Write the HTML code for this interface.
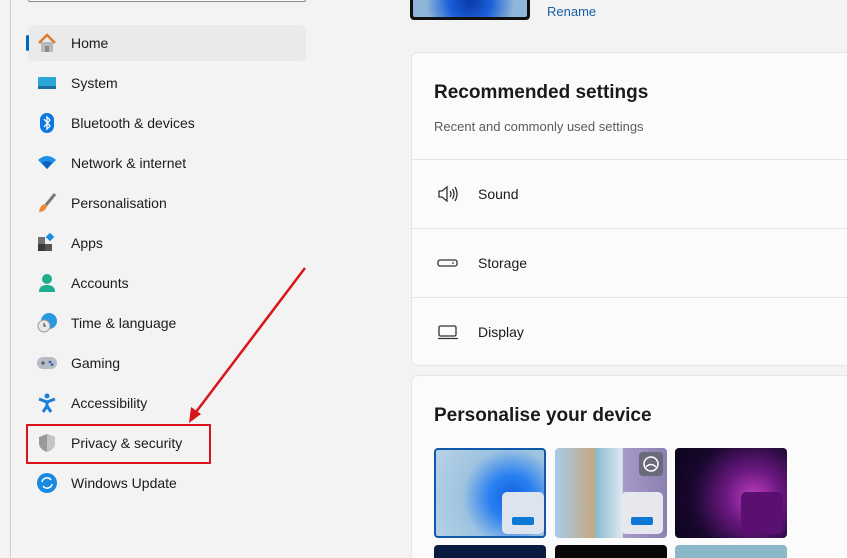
<!DOCTYPE html>
<html style="width:847px;height:558px;overflow:hidden"><head><meta charset="utf-8"><style>
*{margin:0;padding:0;box-sizing:border-box}
body{width:847px;height:558px;overflow:hidden;background:#f3f3f3;font-family:"Liberation Sans",sans-serif;position:relative;color:#1a1a1a}
.abs{position:absolute}
.side-line{left:10px;top:0;width:1px;height:558px;background:#cfcfcf}
.search{left:28px;top:0;width:278px;height:2px;border:1px solid #8a8a8a;border-top:none;border-radius:0 0 5px 5px;background:#fbfbfb}
.item{position:absolute;left:28px;width:278px;height:36px;border-radius:5px;font-size:14px;line-height:36px;padding-left:43px;color:#1b1b1b}
.item.sel{background:#eaeaea}
.ic{position:absolute;left:9px;top:8px;width:20px;height:20px}
.card{position:absolute;left:411px;width:436px;background:#fbfbfb;border:1px solid #e5e5e5;border-right:none;border-radius:7px 0 0 7px}
.row{position:absolute;left:0;width:100%;border-top:1px solid #e5e5e5;height:69px;font-size:14px;line-height:69px;padding-left:66px;color:#1b1b1b}
.ri{position:absolute;left:25px;top:25px}
.th{position:absolute;top:448px;width:112px;height:90px;border-radius:4px;overflow:hidden}
</style></head><body>
<div class="abs side-line"></div>
<div class="abs search"></div>

<div class="item sel" style="top:25px"><div class="abs" style="left:-2px;top:10px;width:3px;height:16px;background:#0067c0;border-radius:2px"></div>
<svg class="ic" viewBox="0 0 20 20"><path d="M4 9v10h12V9" fill="#b9b9b9"/><path d="M2 10L10 2l8 8" fill="none" stroke="#e07a2a" stroke-width="2.5"/><rect x="8" y="13" width="4" height="6" fill="#8a8a8a"/></svg>Home</div>
<div class="item" style="top:65px"><svg class="ic" viewBox="0 0 20 20"><rect x="1" y="4" width="18" height="12" rx="1" fill="#2aa6d8"/><rect x="1" y="13" width="18" height="3" fill="#1a6fa0"/></svg>System</div>
<div class="item" style="top:105px"><svg class="ic" viewBox="0 0 20 20"><rect x="3" y="0" width="14" height="20" rx="7" fill="#0b78e0"/><path d="M7 6l6 7-3 3V4l3 3-6 7" fill="none" stroke="#fff" stroke-width="1.3"/></svg>Bluetooth &amp; devices</div>
<div class="item" style="top:145px"><svg class="ic" viewBox="0 0 20 20"><path d="M1 7Q10-1 19 7L10 16Z" fill="#1e90e8"/><path d="M5 10Q10 6 15 10L10 16Z" fill="#0a62c0"/></svg>Network &amp; internet</div>
<div class="item" style="top:185px"><svg class="ic" viewBox="0 0 20 20"><path d="M18 1L9 12" stroke="#777" stroke-width="3"/><path d="M8 11q-5 1-6 8q6 0 8-6z" fill="#f08a2a"/></svg>Personalisation</div>
<div class="item" style="top:225px"><svg class="ic" viewBox="0 0 20 20"><rect x="1" y="4" width="7" height="7" fill="#707070"/><rect x="1" y="11" width="7" height="7" fill="#3a3a3a"/><rect x="8" y="11" width="7" height="7" fill="#555"/><rect x="10" y="1" width="6" height="6" transform="rotate(45 13 4)" fill="#1b8de0"/></svg>Apps</div>
<div class="item" style="top:265px"><svg class="ic" viewBox="0 0 20 20"><circle cx="10" cy="6" r="5" fill="#1fae8c"/><path d="M2 19q0-7 8-7t8 7z" fill="#1fae8c"/></svg>Accounts</div>
<div class="item" style="top:305px"><svg class="ic" viewBox="0 0 20 20"><circle cx="12" cy="8" r="8" fill="#2a9ae0"/><circle cx="7" cy="13" r="6" fill="#e8e8e8" stroke="#999" stroke-width="1"/><path d="M7 10v3h2" stroke="#333" fill="none"/></svg>Time &amp; language</div>
<div class="item" style="top:345px"><svg class="ic" viewBox="0 0 20 20"><rect x="0" y="4" width="20" height="12" rx="6" fill="#b5bcc5"/><circle cx="13" cy="9" r="1.3" fill="#2c5fa0"/><circle cx="15" cy="11.5" r="1.3" fill="#2c5fa0"/><path d="M4 10h4M6 8v4" stroke="#444"/></svg>Gaming</div>
<div class="item" style="top:385px"><svg class="ic" viewBox="0 0 20 20"><circle cx="10" cy="3" r="2.5" fill="#1a7fd6"/><path d="M2 6l8 3 8-3M10 9v4l-4 6M10 13l4 6" stroke="#1a7fd6" stroke-width="3" fill="none"/></svg>Accessibility</div>
<div class="item" style="top:425px"><svg class="ic" viewBox="0 0 20 20"><path d="M10 1L2 4v6q0 6 8 9 8-3 8-9V4z" fill="#9a9a9a"/><path d="M10 1v18q8-3 8-9V4z" fill="#c4c4c4"/></svg>Privacy &amp; security</div>
<div class="item" style="top:465px"><svg class="ic" viewBox="0 0 20 20"><circle cx="10" cy="10" r="10" fill="#1a8ae0"/><path d="M5 9a5 5 0 0 1 9-2M15 11a5 5 0 0 1-9 2" stroke="#fff" stroke-width="1.5" fill="none"/></svg>Windows Update</div>

<div class="abs" style="left:26px;top:424px;width:185px;height:40px;border:2px solid #d9141b"></div>
<svg class="abs" style="left:0;top:0" width="847" height="558"><line x1="305" y1="268" x2="196" y2="412" stroke="#d9141b" stroke-width="2.5"/><path d="M189 423l2-16 10 7z" fill="#d9141b"/></svg>

<div class="abs" style="left:410px;top:0;width:120px;height:20px;background:#111;border-radius:0 0 4px 4px"><div style="margin:0 3px;height:17px;background:radial-gradient(circle at 50% 10%,#0a3aa8,#1a5fd8 35%,#8fb6d8 75%);border-radius:0 0 2px 2px"></div></div>
<div class="abs" style="left:547px;top:4px;font-size:13px;color:#1a5ea8">Rename</div>

<div class="card" style="top:52px;height:314px">
<div class="abs" style="left:22px;top:29px;font-size:19px;font-weight:bold;color:#1a1a1a">Recommended settings</div>
<div class="abs" style="left:22px;top:66px;font-size:13px;color:#5c5c5c">Recent and commonly used settings</div>
<div class="row" style="top:106px"><svg class="ri" width="22" height="18" viewBox="0 0 22 18"><path d="M2 6h3l5-4v14l-5-4H2z" fill="none" stroke="#333" stroke-width="1.3"/><path d="M13 6q2 3 0 6M15.5 4q3 5 0 10M18 2q4 7 0 14" fill="none" stroke="#333" stroke-width="1.3"/></svg>Sound</div>
<div class="row" style="top:175px"><svg class="ri" width="22" height="18" viewBox="0 0 22 18"><rect x="1" y="6" width="19" height="6" rx="2" fill="none" stroke="#333" stroke-width="1.3"/><circle cx="16" cy="9" r=".9" fill="#333"/></svg>Storage</div>
<div class="row" style="top:244px"><svg class="ri" width="22" height="18" viewBox="0 0 22 18"><rect x="2" y="3" width="17" height="10" rx="1.5" fill="none" stroke="#333" stroke-width="1.3"/><path d="M1 15.5h20" stroke="#333" stroke-width="1.3"/></svg>Display</div>
</div>

<div class="card" style="top:375px;height:183px;border-bottom:none;border-radius:7px 0 0 0">
<div class="abs" style="left:22px;top:29px;font-size:19px;font-weight:bold;color:#1a1a1a">Personalise your device</div>
</div>
<div class="th" style="left:434px;border:2px solid #0f5aa8;background:radial-gradient(circle at 70% 55%,#1060e0 0,#2a80f0 25%,#9fc4e0 55%,#b8d2e6)"><div class="abs" style="left:66px;top:42px;width:42px;height:42px;background:#dde4ee;border-radius:5px"><div class="abs" style="left:10px;top:25px;width:22px;height:8px;background:#0a78d4;border-radius:2px"></div></div></div>
<div class="th" style="left:555px;background:linear-gradient(90deg,#a8cce8 0,#c4a880 35%,#8ab8d0 36%,#dde8f0 60%,#a89ac8 61%,#8c80b0)"><div class="abs" style="left:84px;top:4px;width:24px;height:24px;background:#6a6a7a;border-radius:4px"><svg width="24" height="24"><circle cx="12" cy="12" r="7" fill="none" stroke="#fff" stroke-width="1.5"/><path d="M7 15q5-5 10 0" fill="none" stroke="#fff" stroke-width="1.3"/></svg></div><div class="abs" style="left:66px;top:44px;width:42px;height:42px;background:#e6e8ee;border-radius:5px"><div class="abs" style="left:10px;top:25px;width:22px;height:8px;background:#0a78d4;border-radius:2px"></div></div></div>
<div class="th" style="left:675px;background:radial-gradient(circle at 70% 55%,#c040c0 0,#6a1880 30%,#1a0830 65%,#0a0418)"><div class="abs" style="left:66px;top:44px;width:42px;height:42px;background:#5a1070;border-radius:5px"></div></div>
<div class="th" style="left:434px;top:545px;height:13px;border-radius:4px 4px 0 0;background:#0a1a40"></div>
<div class="th" style="left:555px;top:545px;height:13px;border-radius:4px 4px 0 0;background:#080808"></div>
<div class="th" style="left:675px;top:545px;height:13px;border-radius:4px 4px 0 0;background:#8ab8c8"></div>
</body></html>
